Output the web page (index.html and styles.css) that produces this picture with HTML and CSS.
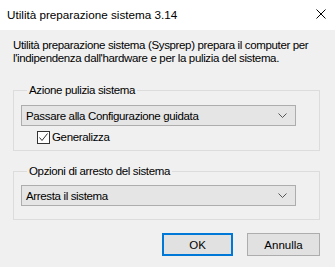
FILE: index.html
```html
<!DOCTYPE html>
<html lang="it">
<head>
  <meta charset="UTF-8">
  <title>Utilità preparazione sistema 3.14</title>
  <meta name="viewport" content="width=device-width,initial-scale=1">
  <link rel="stylesheet" href="styles.css">
</head>
<body>
  <div class="dialog">
    <div class="titlebar">
      <span class="title">Utilità preparazione sistema 3.14</span>
      <svg class="close" width="10" height="10" viewBox="0 0 10 10">
        <path d="M0.5 0.5L9.5 9.5M9.5 0.5L0.5 9.5" stroke="#000" stroke-width="1" fill="none"/>
      </svg>
    </div>

    <div class="content">
      <p class="desc">Utilità preparazione sistema (Sysprep) prepara il computer per<br>l'indipendenza dall'hardware e per la pulizia del sistema.</p>

      <fieldset class="group group-action">
        <legend>Azione pulizia sistema</legend>
        <div class="combo">
          <span>Passare alla Configurazione guidata</span>
          <svg width="9" height="5" viewBox="0 0 9 5"><path d="M0.5 0.5L4.5 4.5L8.5 0.5" stroke="#555" fill="none"/></svg>
        </div>
        <label class="check">
          <span class="box">
            <svg width="11" height="11" viewBox="0 0 11 11"><path d="M1.5 5.5L4 8.5L9.5 1.5" stroke="#333" stroke-width="1" fill="none"/></svg>
          </span>
          Generalizza
        </label>
      </fieldset>

      <fieldset class="group group-shutdown">
        <legend>Opzioni di arresto del sistema</legend>
        <div class="combo">
          <span>Arresta il sistema</span>
          <svg width="9" height="5" viewBox="0 0 9 5"><path d="M0.5 0.5L4.5 4.5L8.5 0.5" stroke="#555" fill="none"/></svg>
        </div>
      </fieldset>

      <div class="buttons">
        <button class="btn btn-default">OK</button>
        <button class="btn">Annulla</button>
      </div>
    </div>
  </div>
</body>
</html>
```

FILE: styles.css
```css
body{margin:0;font-family:"Liberation Sans",Arial,sans-serif;font-size:11.5px;letter-spacing:-0.35px;color:#000;background:#f0f0f0}
.dialog{width:335px;height:267px;background:#f0f0f0;overflow:hidden}
.titlebar{height:30px;background:#fff;display:flex;align-items:center;justify-content:space-between;padding:0 9px 1px 7px;box-sizing:border-box}
.title{font-size:11.7px;letter-spacing:0}
.close{display:block;margin-top:-1px}
.content{padding:9px 15px 0 13px}
.desc{margin:0;line-height:13px;white-space:nowrap}

.group{border:1px solid #dcdcdc;margin:0;padding:0 23px 6px 7px;min-width:0}
.group legend{padding:0 2px;margin-left:6px;line-height:15px}
.group-action{margin-top:18px;padding-top:7px}
.group-shutdown{margin-top:13px;padding-top:6px;padding-bottom:13px}

.combo{height:21px;box-sizing:border-box;border:1px solid #adadad;background:#e5e5e5;
  display:flex;align-items:center;justify-content:space-between;padding:0 8px 0 4px}
.combo svg{display:block}

.check{display:flex;align-items:center;margin:5px 0 0 16px;line-height:13px}
.check .box{width:13px;height:13px;box-sizing:border-box;border:1px solid #333;background:#fff;
  display:flex;align-items:center;justify-content:center;margin-right:2px}
.check .box svg{display:block}

.buttons{display:flex;justify-content:flex-end;gap:14px;margin-top:13px}
.btn{height:23px;width:73px;box-sizing:border-box;border:1px solid #adadad;background:#e1e1e1;
  font:inherit;color:#000;padding:0}
.btn-default{width:71px;border:2px solid #0078d7}
```
